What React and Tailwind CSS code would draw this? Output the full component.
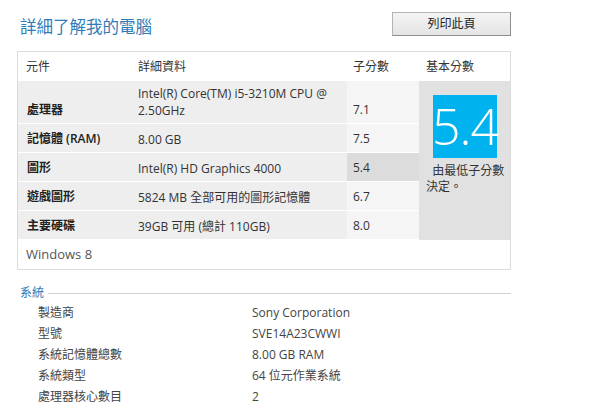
const font = { fontFamily: '"Open Sans", "Noto Sans CJK TC", sans-serif' }

const rows = [
  { name: '處理器', detail: ['Intel(R) Core(TM) i5-3210M CPU @', '2.50GHz'], score: '7.1', tall: true },
  { name: '記憶體 (RAM)', detail: ['8.00 GB'], score: '7.5' },
  { name: '圖形', detail: ['Intel(R) HD Graphics 4000'], score: '5.4', low: true },
  { name: '遊戲圖形', detail: ['5824 MB 全部可用的圖形記憶體'], score: '6.7' },
  { name: '主要硬碟', detail: ['39GB 可用 (總計 110GB)'], score: '8.0' },
]

const system = [
  ['製造商', 'Sony Corporation'],
  ['型號', 'SVE14A23CWWI'],
  ['系統記憶體總數', '8.00 GB RAM'],
  ['系統類型', '64 位元作業系統'],
  ['處理器核心數目', '2'],
]

function ScoreRow({ row }) {
  return (
    <div className={`flex border-b border-white ${row.tall ? 'h-[43px]' : 'h-[29px]'}`}>
      <div className="flex w-[113px] items-end bg-[#eeeeee] pb-[4px] pl-[9px] text-[12px] font-semibold text-[#222]">
        {row.name}
      </div>
      <div className="flex w-[216px] flex-col justify-end bg-[#eeeeee] pb-[4px] pl-[7px] text-[12px] leading-[17px] text-[#333]">
        {row.detail.map((line) => (
          <span key={line}>{line}</span>
        ))}
      </div>
      <div className={`flex w-[72px] items-end pb-[4px] pl-[6px] text-[12px] text-[#333] ${row.low ? 'bg-[#dcdcdc]' : 'bg-[#f5f5f5]'}`}>
        {row.score}
      </div>
    </div>
  )
}

export default function App() {
  return (
    <div className="h-[412px] w-[600px] overflow-hidden bg-white" style={font}>
      <div className="flex items-start justify-between pl-[20px] pr-[89px] pt-[12px]">
        <h1 className="mt-[3px] text-[16.5px] leading-[24px] text-[#2e7bb8]">詳細了解我的電腦</h1>
        <button
          type="button"
          className="h-[24px] w-[119px] border border-[#b4b4b4] border-b-[#8e8e8e] border-r-[#8e8e8e] bg-gradient-to-b from-[#f4f4f4] to-[#e4e4e4] text-[12px] text-[#222]"
        >
          列印此頁
        </button>
      </div>

      <div className="ml-[17px] mt-[12px] w-[494px] border border-[#dcdcdc]">
        <div className="flex h-[29px] items-center text-[12px] text-[#333]">
          <span className="w-[113px] pl-[8px]">元件</span>
          <span className="w-[216px] pl-[7px]">詳細資料</span>
          <span className="w-[72px] pl-[6px]">子分數</span>
          <span className="pl-[7px]">基本分數</span>
        </div>

        <div className="flex">
          <div className="w-[401px]">
            {rows.map((row) => (
              <ScoreRow key={row.name} row={row} />
            ))}
          </div>
          <div className="flex-1 bg-[#e1e1e1] pl-[14px] pt-[14px]">
            <div className="flex h-[63px] w-[64px] items-center justify-center bg-[#00b3ef] pb-[2px] text-[50px] font-light leading-none tracking-[-1px] text-white">
              5.4
            </div>
            <p className="-ml-[7px] mt-[5px] pr-[4px] text-[12px] leading-[16px] text-[#333]">
              &nbsp;&nbsp;由最低子分數決定。
            </p>
          </div>
        </div>

        <div className="flex h-[29px] items-center pl-[8px] text-[13px] text-[#555]">Windows 8</div>
      </div>

      <div className="mt-[14px] flex items-center pl-[20px] pr-[89px]">
        <span className="text-[12px] text-[#2e7bb8]">系統</span>
        <div className="ml-[4px] h-px flex-1 bg-[#d2d2d2]" />
      </div>

      <div className="flex flex-col">
        {system.map(([label, value]) => (
          <div key={label} className="flex h-[21px] items-center text-[12px] text-[#444]">
            <span className="w-[252px] pl-[38px]">{label}</span>
            <span>{value}</span>
          </div>
        ))}
      </div>
    </div>
  )
}
